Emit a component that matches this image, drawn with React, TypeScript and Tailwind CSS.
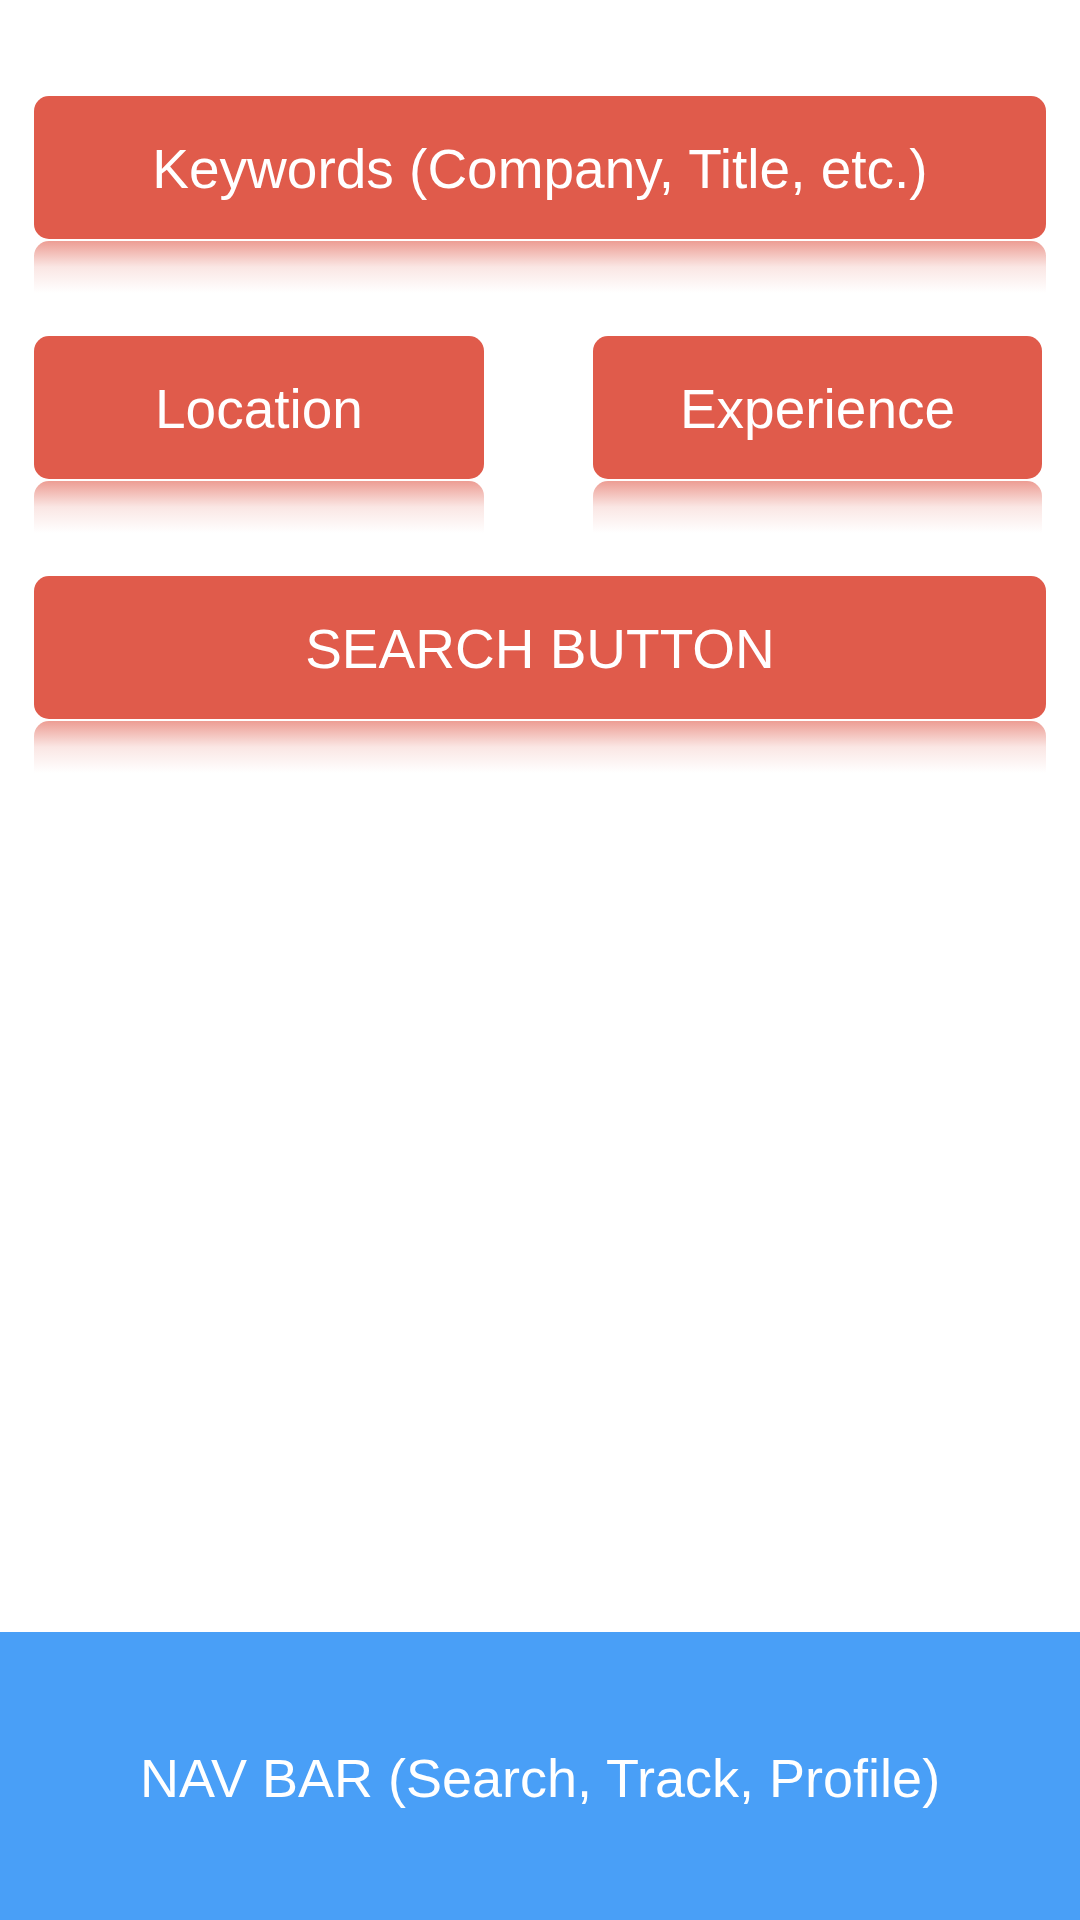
import React from "react";

function RedButton({ label, className = "" }: { label: string; className?: string }) {
  return (
    <div className={`flex flex-col ${className}`}>
      <div className="flex h-[143px] items-center justify-center rounded-[15px] bg-[#e05b4b] pt-[3px]">
        <span className="text-[55px] leading-none text-white font-['Liberation_Sans',Arial,sans-serif] whitespace-nowrap">
          {label}
        </span>
      </div>
      <div className="mt-[2px] h-[52px] rounded-t-[15px] bg-gradient-to-b from-[#e05b4b]/60 via-[#e05b4b]/15 to-transparent" />
    </div>
  );
}

export default function App() {
  return (
    <div className="flex h-[1920px] w-[1080px] flex-col bg-white font-['Liberation_Sans',Arial,sans-serif]">
      <div className="flex flex-1 flex-col gap-[43px] px-[34px] pt-[96px]">
        <RedButton label="Keywords (Company, Title, etc.)" />
        <div className="flex gap-[109px]">
          <RedButton label="Location" className="w-[450px]" />
          <RedButton label="Experience" className="w-[449px]" />
        </div>
        <RedButton label="SEARCH BUTTON" />
      </div>
      <div className="flex h-[288px] items-center justify-center bg-[#499ff7] pt-[3px]">
        <span className="text-[54px] leading-none text-white whitespace-nowrap">
          NAV BAR (Search, Track, Profile)
        </span>
      </div>
    </div>
  );
}
